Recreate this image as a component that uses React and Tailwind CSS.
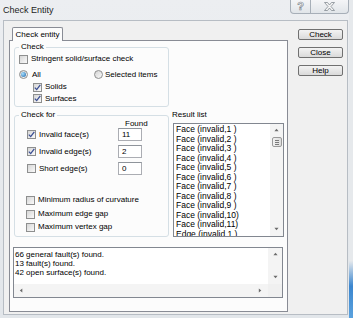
import React from "react";

function Box({ checked }) {
  return (
    <span className="w-[9px] h-[9px] shrink-0 border border-[#8e8f8f] bg-linear-to-br from-[#d6d6d6] to-[#fafafa] flex items-center justify-center">
      {checked && (
        <svg width="7" height="7" viewBox="0 0 7 7">
          <path d="M0.8 3.6 L2.7 5.6 L6.3 0.9" stroke="#3a4e93" strokeWidth="1.3" fill="none" />
        </svg>
      )}
    </span>
  );
}

function Radio({ on }) {
  return (
    <span className="w-[9px] h-[9px] shrink-0 rounded-full border border-[#8e8f8f] bg-linear-to-br from-[#d4d4d4] to-[#fafafa] flex items-center justify-center">
      {on && <span className="w-[5px] h-[5px] rounded-full bg-[radial-gradient(circle_at_35%_35%,#a6e0ff,#1d63a8)]" />}
    </span>
  );
}

function Arrow({ dir }) {
  const d = {
    up: "M0.5 4 L3 1 L5.5 4 Z",
    down: "M0.5 1 L3 4 L5.5 1 Z",
    left: "M4 0.5 L1 3 L4 5.5 Z",
    right: "M1 0.5 L4 3 L1 5.5 Z",
  }[dir];
  return (
    <svg width="5" height="5" viewBox="0 0 6 6">
      <path d={d} fill="#6b6b6b" />
    </svg>
  );
}

function Legend({ children }) {
  return <legend className="px-[2px] leading-[10px] text-[8px]">{children}</legend>;
}

function CheckRow({ checked, label, className }) {
  return (
    <div className={"flex items-center " + className}>
      <Box checked={checked} />
      <span className="ml-[3px] leading-[10px]">{label}</span>
    </div>
  );
}

function FoundRow({ checked, label, value, className }) {
  return (
    <div className={"flex items-center h-[13px] " + className}>
      <div className="w-[99px] pl-[8px] flex items-center">
        <Box checked={checked} />
        <span className="ml-[3px] leading-[10px]">{label}</span>
      </div>
      <div className="w-[24px] h-[13px] border border-[#abadb3] border-t-[#8f949b] bg-white pl-[3px] leading-[11px]">
        {value}
      </div>
    </div>
  );
}

export default function App() {
  const items = [];
  for (let i = 1; i <= 11; i++) items.push(`Face (invalid,${i}${i < 10 ? " " : ""})`);
  items.push("Edge (invalid,1 )");

  return (
    <div className="w-[353px] h-[318px] flex overflow-hidden bg-[#e4e8ec] font-['Liberation_Sans',Arial,sans-serif] text-[8px] text-black">
      <div className="w-[349px] h-full flex flex-col bg-linear-to-b from-[#eceef1] to-[#e2e6ea]">
        {/* title bar */}
        <div className="h-[20px] flex items-start shrink-0">
          <div className="pl-[3px] pt-[5px] text-[9px] leading-[10px] text-[#1e1e1e]">Check Entity</div>
          <div className="ml-auto flex h-[14px] border border-t-0 border-[#a7afb8] rounded-b-[4px] bg-linear-to-b from-[#f4f5f7] to-[#e1e5e9]">
            <div className="w-[20px] border-r border-[#a7afb8] flex items-center justify-center">
              <span className="text-[11px] leading-[11px] font-bold text-[#f4f4f4] [-webkit-text-stroke:0.6px_#7c838b]">?</span>
            </div>
            <div className="w-[37px] flex items-center justify-center">
              <svg width="11" height="9" viewBox="0 0 11 9">
                <path d="M0.5 0.5 H3.5 L5.5 3 L7.5 0.5 H10.5 L7 4.5 L10.5 8.5 H7.5 L5.5 6 L3.5 8.5 H0.5 L4 4.5 Z" fill="#f4f4f4" stroke="#838a92" strokeWidth="0.8" />
              </svg>
            </div>
          </div>
        </div>

        {/* client area */}
        <div className="ml-[3px] w-[345px] h-[295px] border border-[#b7bdc4] bg-[#f0f0f0] flex items-start">
          {/* tab control */}
          <div className="ml-[5px] mt-[6px] flex flex-col">
            <div className="ml-[3px] w-[51px] h-[14px] -mb-[1px] relative z-10 border border-b-0 border-[#898c95] rounded-t-[2px] bg-[#fcfcfc] text-center leading-[13px]">
              Check entity
            </div>
            <div className="w-[279px] h-[272px] border border-[#898c95] bg-[#fcfcfc] flex flex-col">
              {/* Check group */}
              <fieldset className="ml-[4px] mt-[1px] w-[155px] border border-[#d5dfe5] rounded-[3px] pl-[4px] pr-[4px] pb-[2px]">
                <Legend>Check</Legend>
                <CheckRow className="mt-[2px] h-[10px]" label="Stringent solid/surface check" />
                <div className="mt-[5px] h-[11px] flex items-center">
                  <div className="w-[75px] flex items-center">
                    <Radio on />
                    <span className="ml-[4px]">All</span>
                  </div>
                  <Radio />
                  <span className="ml-[2px]">Selected items</span>
                </div>
                <CheckRow className="mt-[2px] h-[10px] pl-[14px]" checked label="Solids" />
                <CheckRow className="mt-[1px] h-[11px] pl-[14px]" checked label="Surfaces" />
              </fieldset>

              {/* middle row */}
              <div className="mt-[3px] flex items-start">
                <fieldset className="ml-[4px] w-[155px] border border-[#d5dfe5] rounded-[3px] pl-[4px] pr-[4px] pb-[4px]">
                  <Legend>Check for</Legend>
                  <div className="h-[8px] pl-[106px] leading-[8px]">Found</div>
                  <FoundRow checked label="Invalid face(s)" value="11" />
                  <FoundRow className="mt-[4px]" checked label="Invalid edge(s)" value="2" />
                  <FoundRow className="mt-[4px]" label="Short edge(s)" value="0" />
                  <CheckRow className="mt-[20px] h-[10px] pl-[7px]" label="Minimum radius of curvature" />
                  <CheckRow className="mt-[4px] h-[10px] pl-[7px]" label="Maximum edge gap" />
                  <CheckRow className="mt-[3px] h-[10px] pl-[7px]" label="Maximum vertex gap" />
                </fieldset>

                <div className="ml-[3px] flex flex-col">
                  <div className="h-[10px] leading-[10px]">Result list</div>
                  <div className="mt-[3px] ml-[1px] w-[111px] h-[114px] border border-[#828790] bg-white flex">
                    <div className="flex-1 pl-[2px] pt-[1px] overflow-hidden text-[8.5px]">
                      {items.map((t) => (
                        <div key={t} className="leading-[9.5px] whitespace-pre">{t}</div>
                      ))}
                    </div>
                    <div className="w-[13px] bg-[#f4f4f4] flex flex-col items-center">
                      <div className="h-[12px] flex items-center justify-center"><Arrow dir="up" /></div>
                      <div className="mt-[1px] w-[10px] h-[10px] border border-[#9a9a9a] rounded-[2px] bg-linear-to-r from-[#f1f1f1] to-[#dcdcdc] flex flex-col items-center justify-center gap-[1px]">
                        <span className="w-[4px] h-px bg-[#7a7a7a]" />
                        <span className="w-[4px] h-px bg-[#7a7a7a]" />
                        <span className="w-[4px] h-px bg-[#7a7a7a]" />
                      </div>
                      <div className="flex-1" />
                      <div className="h-[13px] flex items-center justify-center"><Arrow dir="down" /></div>
                    </div>
                  </div>
                </div>
              </div>

              {/* output box */}
              <div className="mt-[10px] ml-[3px] w-[270px] h-[51px] border border-[#828790] bg-white flex flex-col">
                <div className="flex h-[36px]">
                  <div className="flex-1 pl-[1px] pt-[2px]">
                    <div className="leading-[9.2px]">66 general fault(s) found.</div>
                    <div className="leading-[9.2px]">13 fault(s) found.</div>
                    <div className="leading-[9.2px]">42 open surface(s) found.</div>
                  </div>
                  <div className="w-[14px] bg-[#f4f4f4] flex flex-col items-center justify-between py-[4px]">
                    <Arrow dir="up" />
                    <Arrow dir="down" />
                  </div>
                </div>
                <div className="flex h-[13px]">
                  <div className="flex-1 bg-[#f4f4f4] flex items-center justify-between pl-[5px] pr-[5px]">
                    <Arrow dir="left" />
                    <Arrow dir="right" />
                  </div>
                  <div className="w-[14px] bg-[#f0f0f0]" />
                </div>
              </div>
            </div>
          </div>

          {/* buttons */}
          <div className="ml-[10px] mt-[8px] flex flex-col gap-[7px]">
            {["Check", "Close", "Help"].map((b) => (
              <div
                key={b}
                className="w-[45px] h-[11px] border border-[#707070] rounded-[2px] bg-linear-to-b from-[#f3f3f3] to-[#dadada] text-center leading-[9px]"
              >
                {b}
              </div>
            ))}
          </div>
        </div>
      </div>
      <div className="flex-1 bg-[linear-gradient(to_bottom,#e6e9ec_82%,#3b86cf_90%,#5ba2de)]" />
    </div>
  );
}
